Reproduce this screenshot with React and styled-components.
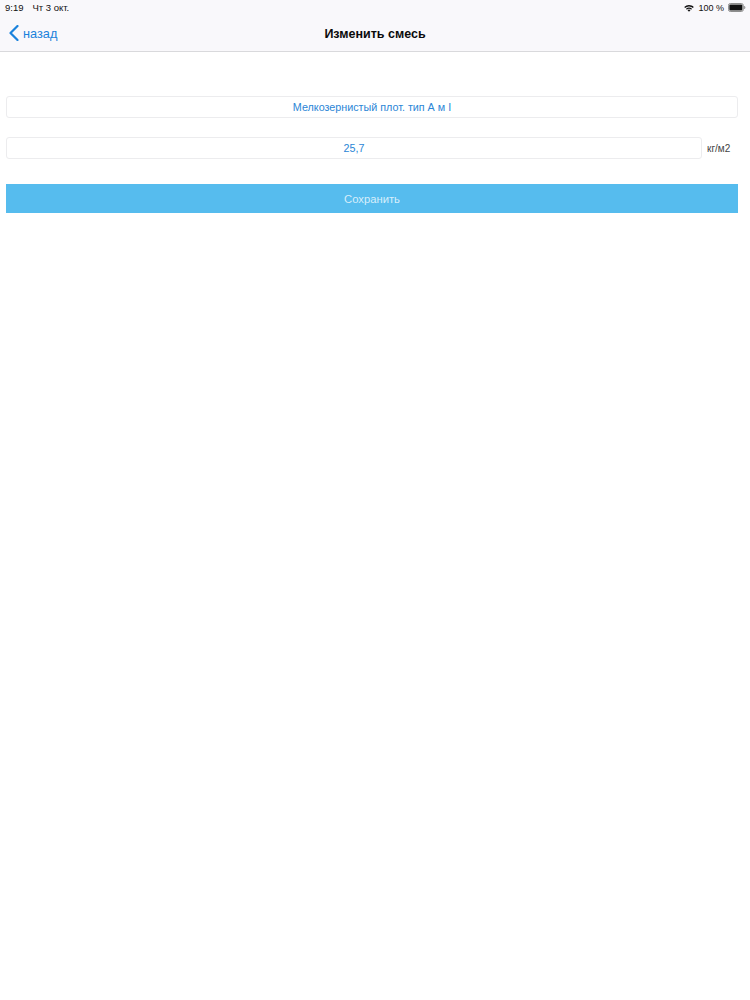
import React from 'react';
import styled, { createGlobalStyle } from 'styled-components';

const Global = createGlobalStyle`
  html, body {
    margin: 0;
    padding: 0;
    background: #fff;
    font-family: "Liberation Sans", Arial, sans-serif;
  }
`;

const Page = styled.div`
  width: 750px;
  height: 1000px;
  background: #fff;
  overflow: hidden;
`;

const Header = styled.header`
  height: 51px;
  background: #f9f8fb;
  border-bottom: 1px solid #d9d9dc;
  box-sizing: content-box;
`;

const StatusBar = styled.div`
  height: 15px;
  display: flex;
  align-items: center;
  justify-content: space-between;
  padding: 0 4px 0 5px;
  font-size: 9.5px;
  color: #111;
`;

const StatusGroup = styled.div`
  display: flex;
  align-items: center;
  gap: ${({ $gap }) => $gap}px;
`;

const Percent = styled.span`
  font-size: 9px;
`;

const NavBar = styled.nav`
  height: 36px;
  display: grid;
  grid-template-columns: 1fr auto 1fr;
  align-items: center;
`;

const BackLink = styled.a`
  display: flex;
  align-items: center;
  gap: 4px;
  padding-left: 9px;
  font-size: 12.75px;
  color: #1a82dc;
`;

const Title = styled.h1`
  margin: 0;
  padding-top: 1px;
  font-size: 12.5px;
  font-weight: 700;
  color: #0a0a0a;
`;

const Form = styled.form`
  display: flex;
  flex-direction: column;
  padding: 44px 12px 0 6px;
`;

const Row = styled.div`
  display: flex;
  align-items: center;
  margin-bottom: ${({ $after }) => $after}px;
`;

const Field = styled.div`
  flex: 1;
  height: 22px;
  box-sizing: border-box;
  padding-bottom: 1px;
  display: flex;
  align-items: center;
  justify-content: center;
  border: 1px solid #ececee;
  border-radius: 3px;
  font-size: 10.75px;
  color: #2b86d6;
`;

const Unit = styled.span`
  width: 36px;
  flex: none;
  padding-left: 5px;
  box-sizing: border-box;
  font-size: 10px;
  color: #444;
`;

const SaveButton = styled.button`
  height: 29px;
  border: none;
  padding: 0;
  background: #56bcee;
  color: #d6eefb;
  font-family: inherit;
  font-size: 11.25px;
`;

const Battery = () => (
  <svg width="18" height="9" viewBox="0 0 20 9" preserveAspectRatio="none">
    <rect x="0.5" y="0.5" width="16.500" height="8" rx="2" fill="#fff" stroke="#888" />
    <rect x="1.500" y="1.500" width="14.500" height="6" rx="1" fill="#111" />
    <path d="M18 3v3c.8 0 1.300-.7 1.300-1.500S18.800 3 18 3z" fill="#888" />
  </svg>
);

const Wifi = () => (
  <svg width="10" height="8" viewBox="0 0 12 9" fill="#111" preserveAspectRatio="none">
    <path d="M6 1.200c2.200 0 4.200.8 5.700 2.200l-1 1.100A6.900 6.900 0 0 0 6 2.700a6.900 6.900 0 0 0-4.700 1.800l-1-1.100A8.300 8.300 0 0 1 6 1.200z" />
    <path d="M6 3.900c1.400 0 2.600.5 3.600 1.400l-1 1.100A3.900 3.900 0 0 0 6 5.400a3.900 3.900 0 0 0-2.600 1l-1-1.100c1-.9 2.200-1.400 3.600-1.400z" />
    <path d="M6 6.300c.7 0 1.300.2 1.700.7L6 8.800 4.300 7c.4-.5 1-.7 1.700-.7z" />
  </svg>
);

const Chevron = () => (
  <svg width="10" height="16" viewBox="0 0 10 16" fill="none">
    <path d="M8.500 1 1.500 8l7 7" stroke="#1a82dc" strokeWidth="2.200" strokeLinecap="round" strokeLinejoin="round" />
  </svg>
);

export default function App() {
  return (
    <Page>
      <Global />
      <Header>
        <StatusBar>
          <StatusGroup $gap={9}>
            <span>9:19</span>
            <span>Чт 3 окт.</span>
          </StatusGroup>
          <StatusGroup $gap={4}>
            <Wifi />
            <Percent>100 %</Percent>
            <Battery />
          </StatusGroup>
        </StatusBar>
        <NavBar>
          <BackLink>
            <Chevron />
            назад
          </BackLink>
          <Title>Изменить смесь</Title>
        </NavBar>
      </Header>
      <Form>
        <Row $after={19}>
          <Field>Мелкозернистый плот. тип А м I</Field>
        </Row>
        <Row $after={25}>
          <Field>25,7</Field>
          <Unit>кг/м2</Unit>
        </Row>
        <SaveButton type="button">Сохранить</SaveButton>
      </Form>
    </Page>
  );
}
